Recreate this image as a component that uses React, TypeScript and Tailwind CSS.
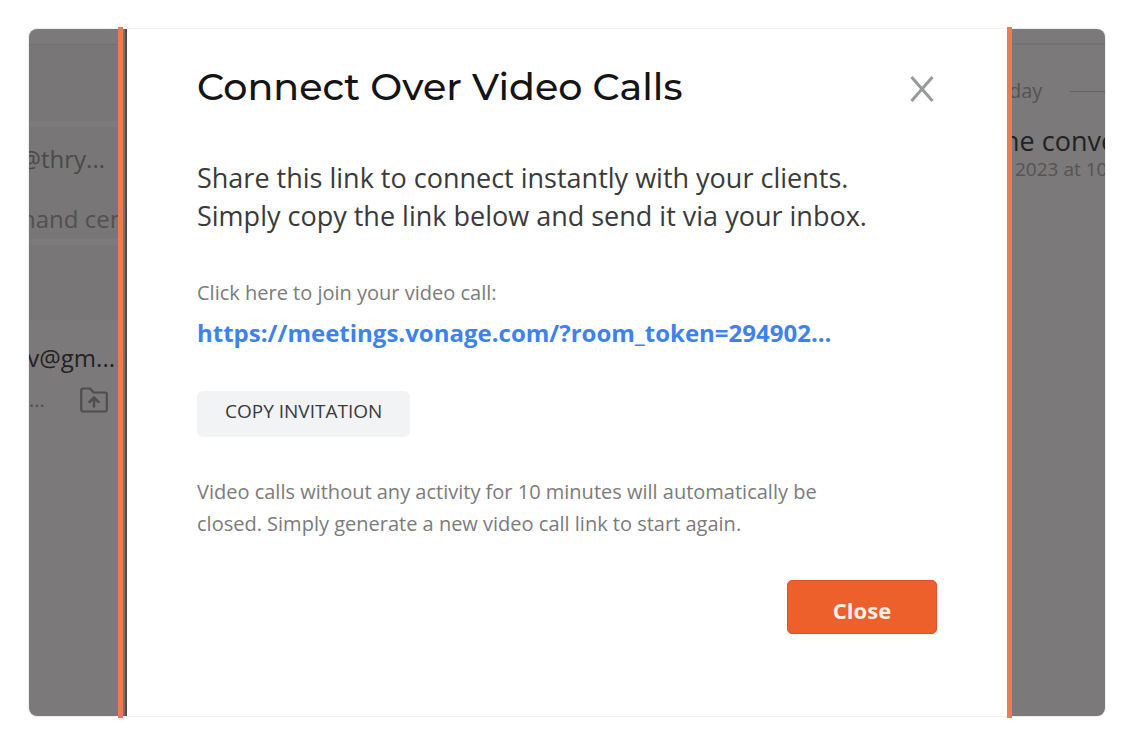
import { useState } from "react";

const INVITE_URL = "https://meetings.vonage.com/?room_token=294902...";

function ArchiveIcon() {
    return (
        <svg width="28" height="26" viewBox="0 0 28 26" fill="none" stroke="#4f4e50" strokeWidth="2.2" strokeLinecap="round" strokeLinejoin="round" aria-hidden="true">
            <path d="M3 1.500h6.500l1.500 1 2.500 3h11.500a1.800 1.800 0 0 1 1.800 1.800v15.400a1.800 1.800 0 0 1-1.800 1.800h-22a1.800 1.800 0 0 1-1.800-1.800v-19.400a1.800 1.800 0 0 1 1.800-1.800z" />
            <path d="M14 19.500v-9M9.500 15l4.500-4.500 4.500 4.500" strokeWidth="2.500" />
        </svg>
    );
}

function InboxPane() {
    return (
        <aside className="relative w-[98px] shrink-0">
            <div className="flex h-full flex-col overflow-hidden rounded-l-lg bg-[#7b7979] font-['Open_Sans',sans-serif] whitespace-nowrap">
                <div className="h-4 border-b border-[#727070]" />
                <div className="h-[76px] bg-[#787676]" />
                <div className="h-1.5 bg-[#7c7a7a]" />
                <div className="flex h-[112px] flex-col bg-[#787676] pt-4 text-[24px] leading-8 text-[#4b4a4a]">
                    <p className="flex justify-end pr-[22px]">@thry...</p>
                    <p className="-mr-1.5 flex justify-end pt-7 text-[#525050]">hand cent</p>
                </div>
                <div className="h-1.5 bg-[#7c7a7a]" />
                <div className="h-[75px] bg-[#787676]" />
                <p className="flex justify-end pt-[22px] pr-3 text-[24px] leading-8 text-[#232223]">v@gm...</p>
                <div className="flex items-center justify-between pt-3 pr-[19px] text-[20px] leading-7 text-[#4f4e50]">
                    <span>...</span>
                    <ArchiveIcon />
                </div>
            </div>
            <div className="absolute inset-y-0 right-0 w-1 border-r-2 border-[#4d4c4c] bg-[#747272]" />
            <div className="absolute -inset-y-0.5 right-1 w-[5px] bg-[#e97c52]" />
        </aside>
    );
}

function ConversationPane() {
    return (
        <aside className="relative w-[98px] shrink-0">
            <div className="flex h-full flex-col overflow-hidden rounded-r-lg bg-[#7b7979] font-['Open_Sans',sans-serif] whitespace-nowrap">
                <div className="h-4 border-b-2 border-[#757375]" />
                <div className="flex items-center gap-7 pt-8 pl-0.5 text-[20px] leading-7 text-[#555354]">
                    <span>day</span>
                    <span className="h-px flex-1 bg-[#636162]" />
                </div>
                <p className="-ml-1 pt-5 text-[27px] leading-8 text-[#232223]">ne conve</p>
                <p className="pl-2 text-[19px] leading-6 text-[#555354]">2023 at 10</p>
            </div>
            <div className="absolute -inset-y-0.5 left-0 w-[5px] bg-[#e97c52]" />
        </aside>
    );
}

interface VideoCallDialogProps {
    onClose: () => void;
}

function VideoCallDialog({ onClose }: VideoCallDialogProps) {
    return (
        <section role="dialog" aria-labelledby="dialog-title" className="flex min-w-0 flex-1 flex-col px-[70px] pt-[34px] pb-20 font-['Open_Sans',sans-serif]">
            <header className="flex items-center justify-between">
                <h1 id="dialog-title" className="font-['Montserrat','Inter',sans-serif] text-[38px] leading-12 font-medium text-[#151415]">
                    Connect Over Video Calls
                </h1>
                <button type="button" aria-label="Dismiss" onClick={onClose} className="flex h-12 w-[30px] items-center justify-center pt-1">
                    <svg width="24" height="28" viewBox="0 0 24 28" stroke="#98999b" strokeWidth="3" aria-hidden="true">
                        <path d="M1.500 2L22.500 26M22.500 2L1.500 26" />
                    </svg>
                </button>
            </header>

            <p className="mt-12 text-[27px] leading-[38px] text-[#3a3a3b]">
                Share this link to connect instantly with your clients.
                <br />
                Simply copy the link below and send it via your inbox.
            </p>

            <p className="mt-[42px] text-[20px] leading-8 text-[#7b7b7c]">Click here to join your video call:</p>
            <a href="#invite" className="mt-1.5 truncate text-[24px] leading-9 font-bold text-[#3d82ee]">
                {INVITE_URL}
            </a>

            <button
                type="button"
                onClick={() => navigator.clipboard.writeText(INVITE_URL)}
                className="mt-10 h-[46px] self-start rounded-md bg-[#f2f3f5] px-7 pb-1.5 text-[19px] leading-7 text-[#3a3a3b]"
            >
                COPY INVITATION
            </button>

            <p className="mt-[39px] text-[20px] leading-8 text-[#7b7b7c]">
                Video calls without any activity for 10 minutes will automatically be
                <br />
                closed. Simply generate a new video call link to start again.
            </p>

            <button
                type="button"
                onClick={onClose}
                className="mt-10 h-[54px] w-[150px] self-end rounded-[5px] border border-[#e2502d] bg-[#ed5f2b] pt-1.5 text-[22px] leading-7 font-bold text-[#fff0e8]"
            >
                Close
            </button>
        </section>
    );
}

export default function App() {
    const [open, setOpen] = useState(true);

    return (
        <main className="min-h-screen bg-white py-7 pr-[26px] pl-7">
            <div className="flex min-h-[689px] rounded-[9px] border border-[#eeeeef] bg-white">
                <InboxPane />
                {open ? <VideoCallDialog onClose={() => setOpen(false)} /> : <div className="flex-1" />}
                <ConversationPane />
            </div>
        </main>
    );
}
